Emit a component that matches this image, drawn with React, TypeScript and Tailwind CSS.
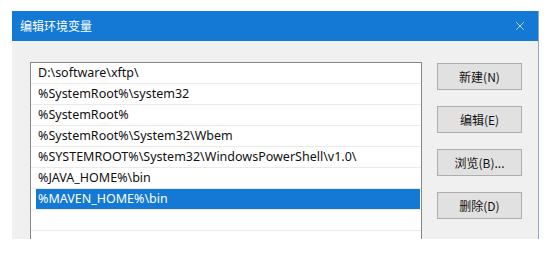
import { X } from "lucide-react";

const ROWS = [
  "D:\\software\\xftp\\",
  "%SystemRoot%\\system32",
  "%SystemRoot%",
  "%SystemRoot%\\System32\\Wbem",
  "%SYSTEMROOT%\\System32\\WindowsPowerShell\\v1.0\\",
  "%JAVA_HOME%\\bin",
  "%MAVEN_HOME%\\bin",
  "",
  "",
];

const BUTTONS = ["新建(N)", "编辑(E)", "浏览(B)...", "删除(D)"];

const font = {
  fontFamily: '"Noto Sans", "Noto Sans CJK SC", sans-serif',
};

export default function App() {
  const selected = 6;
  return (
    <div className="w-[558px] h-[255px] bg-white pt-[11px] pl-[12px]" style={font}>
      <div className="w-[527px] h-[228px] flex flex-col overflow-hidden border-r border-[#8fa8c4]">
        {/* Title bar */}
        <div className="h-[30px] flex-none bg-[#1479d4] flex items-center justify-between pl-[8px] pr-[11px]">
          <span className="text-white text-[12px] leading-none" style={{ fontFamily: '"Noto Sans CJK SC", sans-serif' }}>
            编辑环境变量
          </span>
          <X className="text-white" size={14} strokeWidth={1.2} />
        </div>

        {/* Body */}
        <div className="flex-1 bg-[#f0f0f0] flex pl-[18px] pt-[21px] gap-[15px]">
          <div className="w-[392px] h-[260px] flex-none bg-white border border-[#828790] flex flex-col">
            {ROWS.map((r, i) => (
              <div key={i} className="h-[21px] flex-none border-b border-[#eaeaea] flex">
                <div
                  className={
                    "ml-[5px] mr-[1px] flex-1 h-[20px] flex items-center pl-[2px] text-[12.5px] whitespace-nowrap " +
                    (i === selected ? "bg-[#1479d4] text-white" : "text-[#111]")
                  }
                >
                  {r}
                </div>
              </div>
            ))}
          </div>

          <div className="flex flex-col gap-[16px] pt-[1px]">
            {BUTTONS.map((b) => (
              <button
                key={b}
                className="w-[85px] h-[27px] bg-[#e1e1e1] border border-[#adadad] text-[12px] text-[#111] flex items-center justify-center"
                style={{ fontFamily: '"Noto Sans CJK SC", sans-serif' }}
              >
                {b}
              </button>
            ))}
          </div>
        </div>
      </div>
    </div>
  );
}
